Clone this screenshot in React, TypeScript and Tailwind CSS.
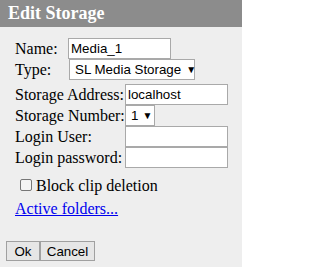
export default function App() {
  const serif = { fontFamily: '"Liberation Serif", "Times New Roman", serif' };
  const input =
    'h-[21px] shrink-0 border border-[#a9a9a9] bg-white px-[2px] text-[13.33px] text-black whitespace-nowrap outline-none';
  return (
    <div className="h-[267px] w-[242px] overflow-hidden bg-[#eeeeee]" style={serif}>
      <div className="flex h-[27px] items-center bg-[#8c8c8c] pl-[8px] text-[18px] font-bold text-white">
        Edit Storage
      </div>
      <div className="pl-[15px] pt-[11px] text-[16px] leading-[19px] text-black">
        <div className="flex h-[21px] items-center">
          <span className="w-[53px] shrink-0">Name:</span>
          <div className={`${input} w-[103px] font-['Liberation_Sans'] leading-[19px]`}>Media_1</div>
        </div>
        <div className="flex h-[21px] items-center">
          <span className="w-[54px] shrink-0">Type:</span>
          <div className={`${input} flex w-[126px] items-center gap-[5px] font-['Liberation_Sans'] leading-[19px]`}>
            <span className="pl-[3px]">SL Media Storage</span>
            <span className="text-[10px]">▼</span>
          </div>
        </div>
        <div className="mt-[4px] flex h-[21px] items-center">
          <span className="w-[110px] shrink-0 whitespace-nowrap">Storage Address:</span>
          <div className={`${input} w-[103px] font-['Liberation_Sans'] leading-[19px]`}>localhost</div>
        </div>
        <div className="flex h-[21px] items-center">
          <span className="w-[110px] shrink-0 whitespace-nowrap">Storage Number:</span>
          <div className={`${input} flex w-[30px] items-center gap-[4px] font-['Liberation_Sans'] leading-[19px]`}>
            <span className="pl-[3px]">1</span>
            <span className="text-[10px]">▼</span>
          </div>
        </div>
        <div className="flex h-[21px] items-center">
          <span className="w-[110px] shrink-0 whitespace-nowrap">Login User:</span>
          <div className={`${input} w-[103px]`} />
        </div>
        <div className="flex h-[21px] items-center">
          <span className="w-[110px] shrink-0 whitespace-nowrap">Login password:</span>
          <div className={`${input} w-[103px]`} />
        </div>
        <div className="mt-[6px] flex h-[22px] items-center pl-[5px]">
          <span className="mr-[4px] h-[12px] w-[12px] rounded-[2px] border border-[#767676] bg-[#f4f4f4]" />
          <span>Block clip deletion</span>
        </div>
        <div className="mt-[3px] h-[20px]">
          <a href="#" className="text-[#0000ee] underline">
            Active folders...
          </a>
        </div>
      </div>
      <div className="mt-[22px] flex pl-[6px] font-['Liberation_Sans'] text-[13.33px] text-black">
        <button className="h-[20px] w-[34px] border border-[#a0a0a0] bg-[#e6e6e6]">Ok</button>
        <button className="h-[20px] w-[55px] border border-[#a0a0a0] bg-[#e6e6e6]">Cancel</button>
      </div>
    </div>
  );
}
